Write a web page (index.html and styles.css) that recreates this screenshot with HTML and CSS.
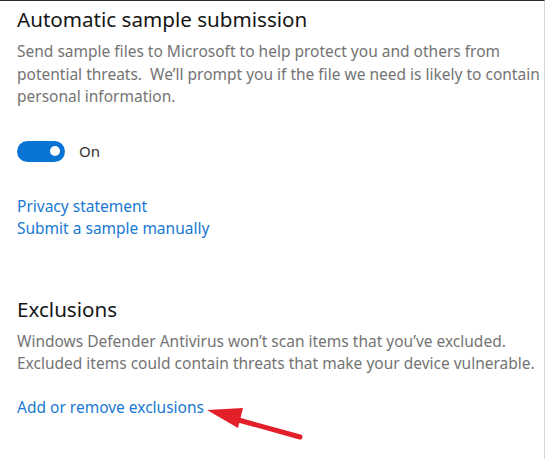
FILE: index.html
```html
<!DOCTYPE html>
<html>
<head>
<meta charset="utf-8">
<link rel="stylesheet" href="styles.css">
</head>
<body>
<div class="page">
  <section class="group">
    <h2 class="title">Automatic sample submission</h2>
    <p class="desc">Send sample files to Microsoft to help protect you and others from<br>potential threats.&nbsp; We’ll prompt you if the file we need is likely to contain<br>personal information.</p>
    <div class="toggle-row">
      <span class="toggle"><span class="knob"></span></span>
      <span class="toggle-label">On</span>
    </div>
    <div class="links">
      <a class="link" href="#">Privacy statement</a>
      <a class="link" href="#">Submit a sample manually</a>
    </div>
  </section>
  <section class="group group-excl">
    <h2 class="title">Exclusions</h2>
    <p class="desc">Windows Defender Antivirus won’t scan items that you’ve excluded.<br>Excluded items could contain threats that make your device vulnerable.</p>
    <div class="links links-excl">
      <a class="link" href="#">Add or remove exclusions</a>
    </div>
  </section>
  <svg class="arrow" width="120" height="50" viewBox="0 0 120 50">
    <line x1="30" y1="20" x2="95" y2="38" stroke="#e3202a" stroke-width="5" stroke-linecap="round"/>
    <polygon points="2,11 38,9 33,29" fill="#e3202a"/>
  </svg>
</div>
</body>
</html>
```
FILE: styles.css
```css
html, body {
  margin: 0;
  padding: 0;
  background: #ffffff;
}
.page {
  position: relative;
  width: 544px;
  height: 458px;
  border-top: 1px solid #2b2b2b;
  border-right: 1px solid #d8d8d8;
  font-family: "Noto Sans", "Open Sans", sans-serif;
  overflow: hidden;
}
.group {
  padding-left: 17px;
}
.title {
  margin: 4px 0 0 0;
  font-size: 20.6px;
  font-weight: 400;
  line-height: 28px;
  color: #161616;
}
.desc {
  margin: 7px 0 0 0;
  font-size: 15.5px;
  line-height: 22.5px;
  color: #747474;
  white-space: nowrap;
}
.toggle-row {
  display: flex;
  align-items: center;
  gap: 14px;
  margin-top: 33px;
}
.toggle {
  display: flex;
  align-items: center;
  justify-content: flex-end;
  width: 48px;
  height: 21px;
  border-radius: 11px;
  background: #0a74d4;
  padding-right: 5px;
  box-sizing: border-box;
}
.knob {
  width: 10px;
  height: 10px;
  border-radius: 50%;
  background: #ffffff;
}
.toggle-label {
  font-size: 15px;
  color: #333333;
}
.links {
  display: flex;
  flex-direction: column;
  margin-top: 33px;
}
.link {
  font-size: 15.5px;
  line-height: 22px;
  color: #1979d2;
  text-decoration: none;
}
.group-excl {
  margin-top: 56px;
}
.links-excl {
  margin-top: 21px;
}
.arrow {
  position: absolute;
  left: 205px;
  top: 398px;
}
```
